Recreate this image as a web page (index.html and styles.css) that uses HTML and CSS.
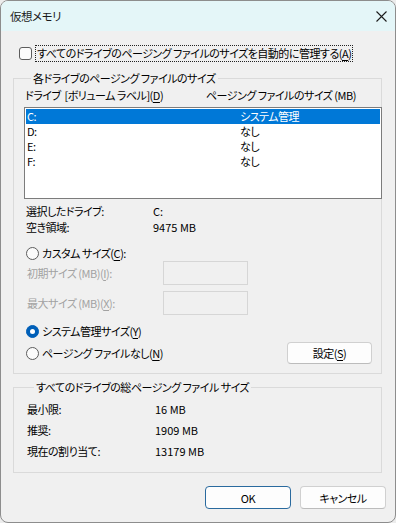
FILE: index.html
```html
<!DOCTYPE html>
<html lang="ja">
<head>
  <meta charset="UTF-8">
  <title>仮想メモリ</title>
  <link rel="stylesheet" href="styles.css">
</head>
<body>

  <div class="window">
    <div class="titlebar">
      <span class="title">仮想メモリ</span>
      <svg class="close" width="11" height="11" viewBox="0 0 11 11">
        <path d="M0.5 0.5 L10.5 10.5 M10.5 0.5 L0.5 10.5" stroke="#1c1c1c" stroke-width="1.1" fill="none"/>
      </svg>
    </div>

    <div class="content">
      <div class="auto-row">
        <span class="checkbox"></span>
        <span class="focus">すべてのドライブのページング ファイルのサイズを自動的に管理する(<u>A</u>)</span>
      </div>

      <fieldset class="group group-drives">
        <legend>各ドライブのページング ファイルのサイズ</legend>

        <div class="list-head">
          <span class="col-drive">ドライブ&nbsp; [ボリューム ラベル](<u>D</u>)</span>
          <span>ページング ファイルのサイズ (MB)</span>
        </div>

        <div class="listbox">
          <div class="list-row selected"><span class="col-name">C:</span><span>システム管理</span></div>
          <div class="list-row"><span class="col-name">D:</span><span>なし</span></div>
          <div class="list-row"><span class="col-name">E:</span><span>なし</span></div>
          <div class="list-row"><span class="col-name">F:</span><span>なし</span></div>
        </div>

        <div class="info">
          <div class="info-row"><span class="info-label">選択したドライブ:</span><span class="num">C:</span></div>
          <div class="info-row"><span class="info-label">空き領域:</span><span class="num">9475 MB</span></div>
        </div>

        <div class="radio-row custom">
          <span class="radio"></span>
          <span>カスタム サイズ(<u>C</u>):</span>
        </div>

        <div class="size-row first">
          <span class="size-label">初期サイズ (MB)(<u>I</u>):</span>
          <span class="textbox"></span>
        </div>
        <div class="size-row">
          <span class="size-label">最大サイズ (MB)(<u>X</u>):</span>
          <span class="textbox"></span>
        </div>

        <div class="radio-row system">
          <span class="radio on"></span>
          <span>システム管理サイズ(<u>Y</u>)</span>
        </div>

        <div class="last-row">
          <div class="radio-row">
            <span class="radio"></span>
            <span>ページング ファイルなし(<u>N</u>)</span>
          </div>
          <button class="btn btn-set">設定(<u>S</u>)</button>
        </div>
      </fieldset>

      <fieldset class="group group-total">
        <legend>すべてのドライブの総ページング ファイル サイズ</legend>
        <div class="total-row"><span class="total-label">最小限:</span><span class="num">16 MB</span></div>
        <div class="total-row"><span class="total-label">推奨:</span><span class="num">1909 MB</span></div>
        <div class="total-row"><span class="total-label">現在の割り当て:</span><span class="num">13179 MB</span></div>
      </fieldset>

      <div class="buttons">
        <button class="btn btn-ok">OK</button>
        <button class="btn">キャンセル</button>
      </div>
    </div>
  </div>

</body>
</html>
```

FILE: styles.css
```css
html {
  background: #ececec;
}

body {
  margin: 0;
  padding: 0;
  font-family: "Noto Sans CJK JP", "Noto Sans", sans-serif;
  font-size: 11px;
  line-height: 16px;
  letter-spacing: -0.5px;
  font-feature-settings: "palt";
  color: #000;
}

u {
  text-decoration: underline;
  text-underline-offset: 2px;
}

.num {
  letter-spacing: 0;
}

.window {
  width: 396px;
  height: 523px;
  box-sizing: border-box;
  border: 1px solid #8d8d8d;
  border-radius: 8px;
  background: #f0f0f0;
  overflow: hidden;
}

.titlebar {
  height: 30px;
  display: flex;
  align-items: center;
  justify-content: space-between;
  padding: 0 8px 0 9px;
  background: #e4f6f8;
}

.title {
  color: #1a1a1a;
  font-size: 11.5px;
}

.close {
  display: block;
}

.content {
  padding: 0 13px 0 12px;
}

/* auto-manage checkbox */
.auto-row {
  display: flex;
  align-items: center;
  height: 17px;
  margin-top: 14px;
  padding-left: 6px;
}

.checkbox {
  flex: none;
  width: 13px;
  height: 13px;
  box-sizing: border-box;
  border: 1px solid #5c5c5c;
  border-radius: 3px;
  background: #fbfbfb;
  margin-right: 3px;
}

.focus {
  border: 1px dotted #222;
  padding: 0 1px;
  line-height: 15px;
  white-space: nowrap;
}

/* group boxes */
.group {
  margin: 0;
  border: 1px solid #dadada;
  padding: 0;
  min-width: 0;
}

.group legend {
  margin-left: 7px;
  padding: 0 2px;
  line-height: 16px;
}

.group-drives {
  margin-top: 8px;
  padding: 1px 0 9px 10px;
}

.list-head {
  display: flex;
  padding-left: 1px;
}

.col-drive {
  width: 181px;
}

.listbox {
  margin: 4px -1px 0 0;
  height: 92px;
  box-sizing: border-box;
  border: 1px solid #7c7c7c;
  background: #fff;
  padding: 1px;
}

.list-row {
  display: flex;
  height: 15px;
  line-height: 15px;
  padding-left: 1px;
}

.list-row.selected {
  background: #0078d7;
  color: #fff;
}

.col-name {
  width: 213px;
}

.info {
  margin-top: 4px;
  padding-left: 2px;
}

.info-row {
  display: flex;
}

.info-label {
  width: 127px;
}

.radio-row {
  display: flex;
  align-items: center;
  height: 16px;
  padding-left: 2px;
}

.radio {
  flex: none;
  width: 13px;
  height: 13px;
  box-sizing: border-box;
  border: 1px solid #5c5c5c;
  border-radius: 50%;
  background: #fbfbfb;
  margin-right: 3px;
  display: flex;
  align-items: center;
  justify-content: center;
}

.radio.on {
  background: #005fb8;
  border-color: #005fb8;
}

.radio.on::after {
  content: "";
  width: 5px;
  height: 5px;
  border-radius: 50%;
  background: #fff;
}

.radio-row.custom {
  margin-top: 10px;
}

.size-row {
  display: flex;
  align-items: center;
  height: 24px;
  margin-top: 6px;
  padding-left: 3px;
  color: #a2a2a2;
}

.size-row.first {
  margin-top: 0;
}

.size-label {
  width: 136px;
}

.textbox {
  width: 85px;
  height: 24px;
  box-sizing: border-box;
  border: 1px solid #d6d6d6;
  background: #f0f0f0;
}

.radio-row.system {
  margin-top: 8px;
}

.last-row {
  display: flex;
  align-items: center;
  justify-content: space-between;
  margin-top: 3px;
  padding-right: 9px;
}

/* buttons */
.btn {
  font-family: inherit;
  font-size: 11px;
  letter-spacing: -0.5px;
  font-feature-settings: "palt";
  color: #000;
  width: 86px;
  height: 23px;
  padding: 0;
  background: #fdfdfd;
  border: 1px solid #d0d0d0;
  border-bottom-color: #bcbcbc;
  border-radius: 4px;
}

.btn-set {
  width: 85px;
  height: 22px;
}

.btn-ok {
  border: 1px solid #2a6a9e;
}

.group-total {
  margin-top: 5px;
  padding: 4px 0 10px 13px;
}

.total-row {
  display: flex;
  line-height: 21px;
}

.total-label {
  width: 128px;
}

.buttons {
  display: flex;
  justify-content: flex-end;
  gap: 9px;
  margin: 13px -4px 0 0;
}
```
